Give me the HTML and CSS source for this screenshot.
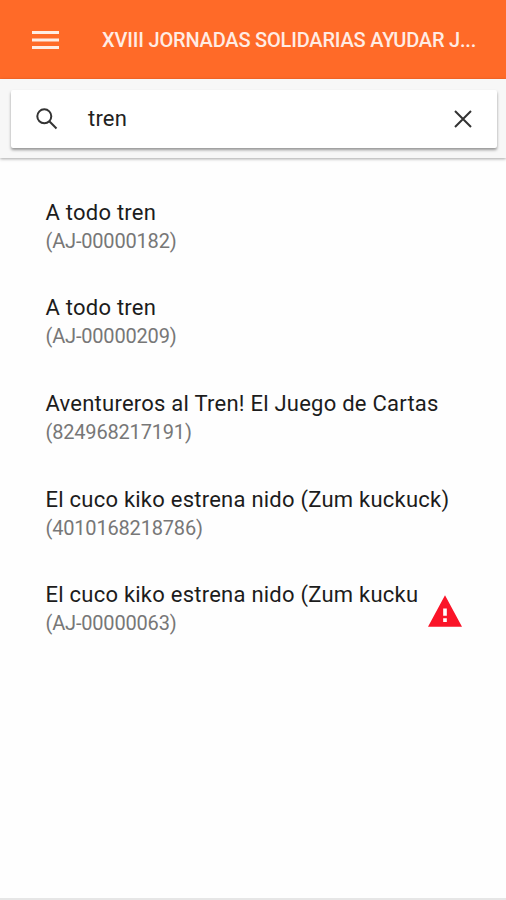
FILE: index.html
```html
<!DOCTYPE html>
<html lang="es">
<head>
    <meta charset="UTF-8">
    <meta name="viewport" content="width=device-width, initial-scale=1.0">
    <title>Jornadas Solidarias</title>
    <link rel="stylesheet" href="styles.css">
</head>
<body>

    <!-- Header -->
    <header class="navbar">
        <button class="icon-button" aria-label="Menu">
            <svg class="menu-icon" viewBox="0 0 27 18"><path d="M0 0h27v3H0zM0 7.5h27v3H0zM0 15h27v3H0z"/></svg>
        </button>
        <h1>XVIII JORNADAS SOLIDARIAS AYUDAR J...</h1>
    </header>

    <!-- Search -->
    <div class="search-bar">
        <div class="search-box">
            <svg class="search-icon" viewBox="0 0 22 22"><circle cx="8.3" cy="8.3" r="7"/><path d="M13.3 13.3L20.5 20.5"/></svg>
            <span class="search-text">tren</span>
            <svg class="close-icon" viewBox="0 0 18 18"><path d="M1 1L17 17M17 1L1 17"/></svg>
        </div>
    </div>

    <!-- Results -->
    <main class="results">
        <div class="item">
            <div class="item-text">
                <h2>A todo tren</h2>
                <p>(AJ-00000182)</p>
            </div>
        </div>
        <div class="item">
            <div class="item-text">
                <h2>A todo tren</h2>
                <p>(AJ-00000209)</p>
            </div>
        </div>
        <div class="item">
            <div class="item-text">
                <h2>Aventureros al Tren! El Juego de Cartas</h2>
                <p>(824968217191)</p>
            </div>
        </div>
        <div class="item">
            <div class="item-text">
                <h2>El cuco kiko estrena nido (Zum kuckuck)</h2>
                <p>(4010168218786)</p>
            </div>
        </div>
        <div class="item">
            <div class="item-text">
                <h2>El cuco kiko estrena nido (Zum kucku</h2>
                <p>(AJ-00000063)</p>
            </div>
            <svg class="warning-icon" viewBox="32 48 448 416"><path d="M32 464h448L256 48zM280 400h-48v-48h48zM280 320h-48v-96h48z"/></svg>
        </div>
    </main>

    <footer></footer>

</body>
</html>
```

FILE: styles.css
```css
* {
    box-sizing: border-box;
}

body {
    display: flex;
    flex-direction: column;
    height: 100vh;
    margin: 0;
    overflow: hidden;
    font-family: Roboto, sans-serif;
    background-color: #fefefe;
}

h1, h2, p {
    margin: 0;
    white-space: nowrap;
}

.navbar {
    display: flex;
    align-items: center;
    flex: none;
    height: 79px;
    padding: 1px 25px 0 32px;
    background-color: #ff6a28;
    color: #ffece4;
}

.navbar h1 {
    flex: 1;
    margin-left: 43px;
    font-size: 20px;
    font-weight: 500;
    letter-spacing: -0.19px;
}

.icon-button {
    display: flex;
    padding: 0;
    border: none;
    background: none;
}

.menu-icon {
    width: 27px;
    height: 18px;
    fill: #ffece4;
}

.search-bar {
    flex: none;
    height: 79px;
    padding: 11px 9px 0 11px;
    background-color: #f7f7f7;
    box-shadow: 0 1px 3px rgba(0, 0, 0, 0.35);
}

.search-box {
    display: flex;
    align-items: center;
    height: 58px;
    padding: 0 25px;
    border-radius: 2px;
    background-color: #fff;
    box-shadow: 0 2px 3px rgba(0, 0, 0, 0.4);
}

.search-icon, .close-icon {
    fill: none;
    stroke: #333;
    stroke-width: 2;
}

.search-icon {
    width: 22px;
    height: 22px;
}

.close-icon {
    width: 18px;
    height: 18px;
}

.search-text {
    flex: 1;
    margin-left: 30px;
    padding-bottom: 2px;
    font-size: 22px;
    letter-spacing: 0.2px;
    color: #222;
}

.results {
    flex: 1;
    padding: 27px 44.5px 0 45.5px;
}

.item {
    display: flex;
    align-items: center;
    height: 95.6px;
}

.item-text {
    flex: 1;
    padding-bottom: 12px;
}

.item h2 {
    font-size: 22px;
    font-weight: 400;
    line-height: 29px;
    letter-spacing: 0.24px;
    color: #1c1c1c;
}

.item p {
    font-size: 20px;
    line-height: 29px;
    letter-spacing: -0.18px;
    color: #777;
}

.warning-icon {
    width: 34px;
    height: 32px;
    margin-bottom: 9px;
    fill: #fa1428;
}

footer {
    flex: none;
    height: 2px;
    background-color: #e6e6e6;
}
```
